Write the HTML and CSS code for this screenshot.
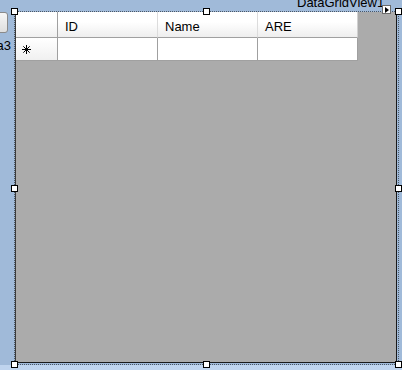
FILE: index.html
```html
<!DOCTYPE html>
<html>
<head>
<meta charset="utf-8">
<link rel="stylesheet" href="styles.css">
</head>
<body>
<div class="page">
  <div class="surface">
    <div class="btn"></div>
    <div class="lbl">a3</div>
    <div class="caption">DataGridView1</div>
    <div class="dgv">
      <div class="gridrow hdr">
        <div class="rh"></div>
        <div class="ch">ID</div>
        <div class="ch">Name</div>
        <div class="ch last">ARE</div>
      </div>
      <div class="gridrow data">
        <div class="rh star">
          <svg width="9" height="9" viewBox="0 0 9 9"><path d="M4.5 0V9M0 4.5H9M1.3 1.3L7.7 7.7M7.7 1.3L1.3 7.7" stroke="#000" stroke-width="1"/></svg>
        </div>
        <div class="cell"></div>
        <div class="cell"></div>
        <div class="cell"></div>
      </div>
    </div>
    <div class="frame"></div>
    <div class="handle h-tl"></div>
    <div class="handle h-tm"></div>
    <div class="handle h-tr"></div>
    <div class="handle h-ml"></div>
    <div class="handle h-mr"></div>
    <div class="handle h-bl"></div>
    <div class="handle h-bm"></div>
    <div class="handle h-br"></div>
    <div class="tag"><svg width="4" height="6" viewBox="0 0 4 6"><path d="M0 0L4 3L0 6Z" fill="#000"/></svg></div>
  </div>
  <div class="band"></div>
</div>
</body>
</html>
```

FILE: styles.css
```css
html, body {
  margin: 0;
  padding: 0;
}
body {
  font-family: "Liberation Sans", Arial, sans-serif;
  font-size: 13px;
  color: #000;
}
.page {
  width: 402px;
  height: 370px;
  overflow: hidden;
  background: #a0bad9;
  display: flex;
  flex-direction: column;
}
.surface {
  position: relative;
  height: 365px;
  padding: 12px 0 0 15px;
  box-sizing: border-box;
  flex: none;
}
.band {
  flex: 1;
  background: #bfd4ee;
}
.btn {
  position: absolute;
  left: -16px;
  top: 12px;
  width: 24px;
  height: 21px;
  box-sizing: border-box;
  border: 1px solid #8a8a8a;
  border-radius: 3px;
  background: linear-gradient(#f6f6f6, #dedede);
}
.lbl {
  position: absolute;
  right: 391px;
  top: 38px;
  line-height: 16px;
  white-space: nowrap;
}
.caption {
  position: absolute;
  left: 297px;
  top: -4px;
  line-height: 14px;
  white-space: nowrap;
}
.dgv {
  width: 382px;
  height: 351px;
  box-sizing: border-box;
  background: #ababab;
  border-left: 1px solid #3a3a3a;
  border-right: 1px solid #1a1a1a;
  border-bottom: 1px solid #1a1a1a;
}
.gridrow {
  display: grid;
  grid-template-columns: 42px 100px 100px 100px;
}
.hdr {
  height: 26px;
}
.data {
  height: 23px;
}
.rh {
  box-sizing: border-box;
  border-right: 1px solid #a0a0a0;
  border-bottom: 1px solid #a0a0a0;
  background: linear-gradient(#ffffff, #f0f0f0);
}
.hdr .rh {
  background: linear-gradient(#ffffff 40%, #f0f0f0);
}
.ch {
  box-sizing: border-box;
  padding: 4px 0 0 7px;
  line-height: 21px;
  border-right: 1px solid #dcdcdc;
  border-bottom: 1px solid #a0a0a0;
  background: linear-gradient(#ffffff 40%, #eeeeee);
}
.ch.last {
  border-right: 1px solid #d0d0d0;
}
.star {
  display: flex;
  align-items: center;
  padding-left: 6px;
}
.star svg {
  display: block;
}
.cell {
  box-sizing: border-box;
  background: #fff;
  border-right: 1px solid #a0a0a0;
  border-bottom: 1px solid #a0a0a0;
}
.frame {
  position: absolute;
  left: 14px;
  top: 11px;
  width: 385px;
  height: 354px;
  box-sizing: border-box;
  border: 1px dotted #4c5866;
  pointer-events: none;
}
.handle {
  position: absolute;
  width: 7px;
  height: 7px;
  box-sizing: border-box;
  background: #fff;
  border: 1px solid #000;
}
.h-tl { left: 11px; top: 8px; }
.h-tm { left: 203px; top: 8px; }
.h-tr { left: 395px; top: 8px; }
.h-ml { left: 11px; top: 185px; }
.h-mr { left: 395px; top: 185px; }
.h-bl { left: 11px; top: 361px; }
.h-bm { left: 203px; top: 361px; }
.h-br { left: 395px; top: 361px; }
.tag {
  position: absolute;
  left: 382px;
  top: 5px;
  width: 9px;
  height: 9px;
  box-sizing: border-box;
  background: #fff;
  border: 1px solid #6a6a6a;
  display: flex;
  align-items: center;
  justify-content: center;
}
.tag svg {
  display: block;
}
```
